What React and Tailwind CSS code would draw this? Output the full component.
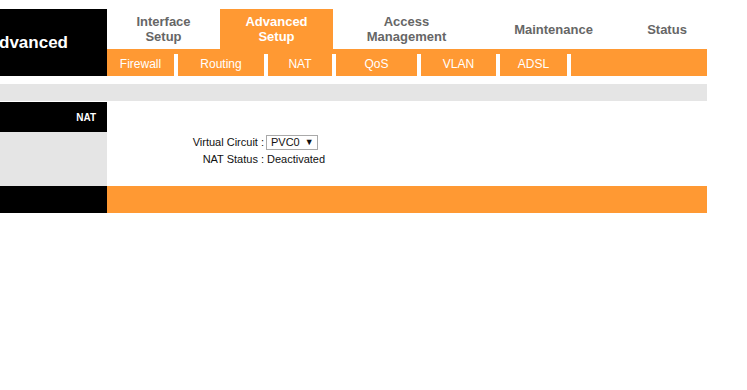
import React from "react";

const tabs = [
  { label: ["Interface", "Setup"], w: "w-[113px]" },
  { label: ["Advanced", "Setup"], w: "w-[113px]", active: true },
  { label: ["Access", "Management"], w: "w-[147px]" },
  { label: ["Maintenance"], w: "w-[147px]" },
  { label: ["Status"], w: "w-[80px]" },
];

const subTabs = [
  { label: "Firewall", w: "w-[67px]" },
  { label: "Routing", w: "w-[86px]" },
  { label: "NAT", w: "w-[64px]" },
  { label: "QoS", w: "w-[81px]" },
  { label: "VLAN", w: "w-[75px]" },
  { label: "ADSL", w: "w-[67px]" },
];

export default function App() {
  return (
    <div className="w-[747px] h-[390px] bg-white font-['Liberation_Sans',Arial,sans-serif]">
      <div className="w-[707px] pt-[9px]">
        {/* header */}
        <div className="flex h-[67px]">
          <div className="w-[107px] bg-black flex items-center justify-end pr-[39px] overflow-hidden">
            <span className="text-white font-bold text-[17px] whitespace-nowrap">Advanced</span>
          </div>
          <div className="flex-1 flex flex-col">
            <div className="flex h-[40px]">
              {tabs.map((t) => (
                <div
                  key={t.label.join(" ")}
                  className={`${t.w} flex flex-col items-center justify-center text-[13px] leading-[15px] font-bold ${
                    t.active ? "bg-[#ff9933] text-white" : "text-[#666666]"
                  }`}
                >
                  {t.label.map((l) => (
                    <span key={l}>{l}</span>
                  ))}
                </div>
              ))}
            </div>
            <div className="flex h-[27px] bg-[#ff9933] items-end">
              {subTabs.map((s) => (
                <React.Fragment key={s.label}>
                  <div className={`${s.w} h-full flex items-center justify-center pt-[3px] text-white text-[12px]`}>
                    {s.label}
                  </div>
                  <div className="w-[4px] h-[22px] bg-white" />
                </React.Fragment>
              ))}
            </div>
          </div>
        </div>

        <div className="h-[8px]" />
        <div className="h-[17px] bg-[#e5e5e5]" />
        <div className="h-[1px]" />

        {/* section title */}
        <div className="flex h-[30px]">
          <div className="w-[107px] bg-black flex items-center justify-end pr-[11px] text-white font-bold text-[10px]">
            NAT
          </div>
          <div className="flex-1 bg-white" />
        </div>

        {/* content */}
        <div className="flex h-[54px]">
          <div className="w-[107px] bg-[#e5e5e5]" />
          <div className="flex-1 pt-[2px] text-[11px] text-[#111]">
            <div className="grid grid-cols-[157px_auto] gap-x-[3px] auto-rows-[17px] items-center">
              <div className="text-right">Virtual Circuit :</div>
              <div>
                <div className="inline-flex items-center h-[15px] w-[52px] border border-[#a9a9a9] pl-[4px] gap-[5px] -ml-[1px]">
                  <span>PVC0</span>
                  <span className="text-[9px]">▼</span>
                </div>
              </div>
              <div className="text-right">NAT Status :</div>
              <div>Deactivated</div>
            </div>
          </div>
        </div>

        {/* footer */}
        <div className="flex h-[27px]">
          <div className="w-[107px] bg-black" />
          <div className="flex-1 bg-[#ff9933]" />
        </div>
      </div>
    </div>
  );
}
